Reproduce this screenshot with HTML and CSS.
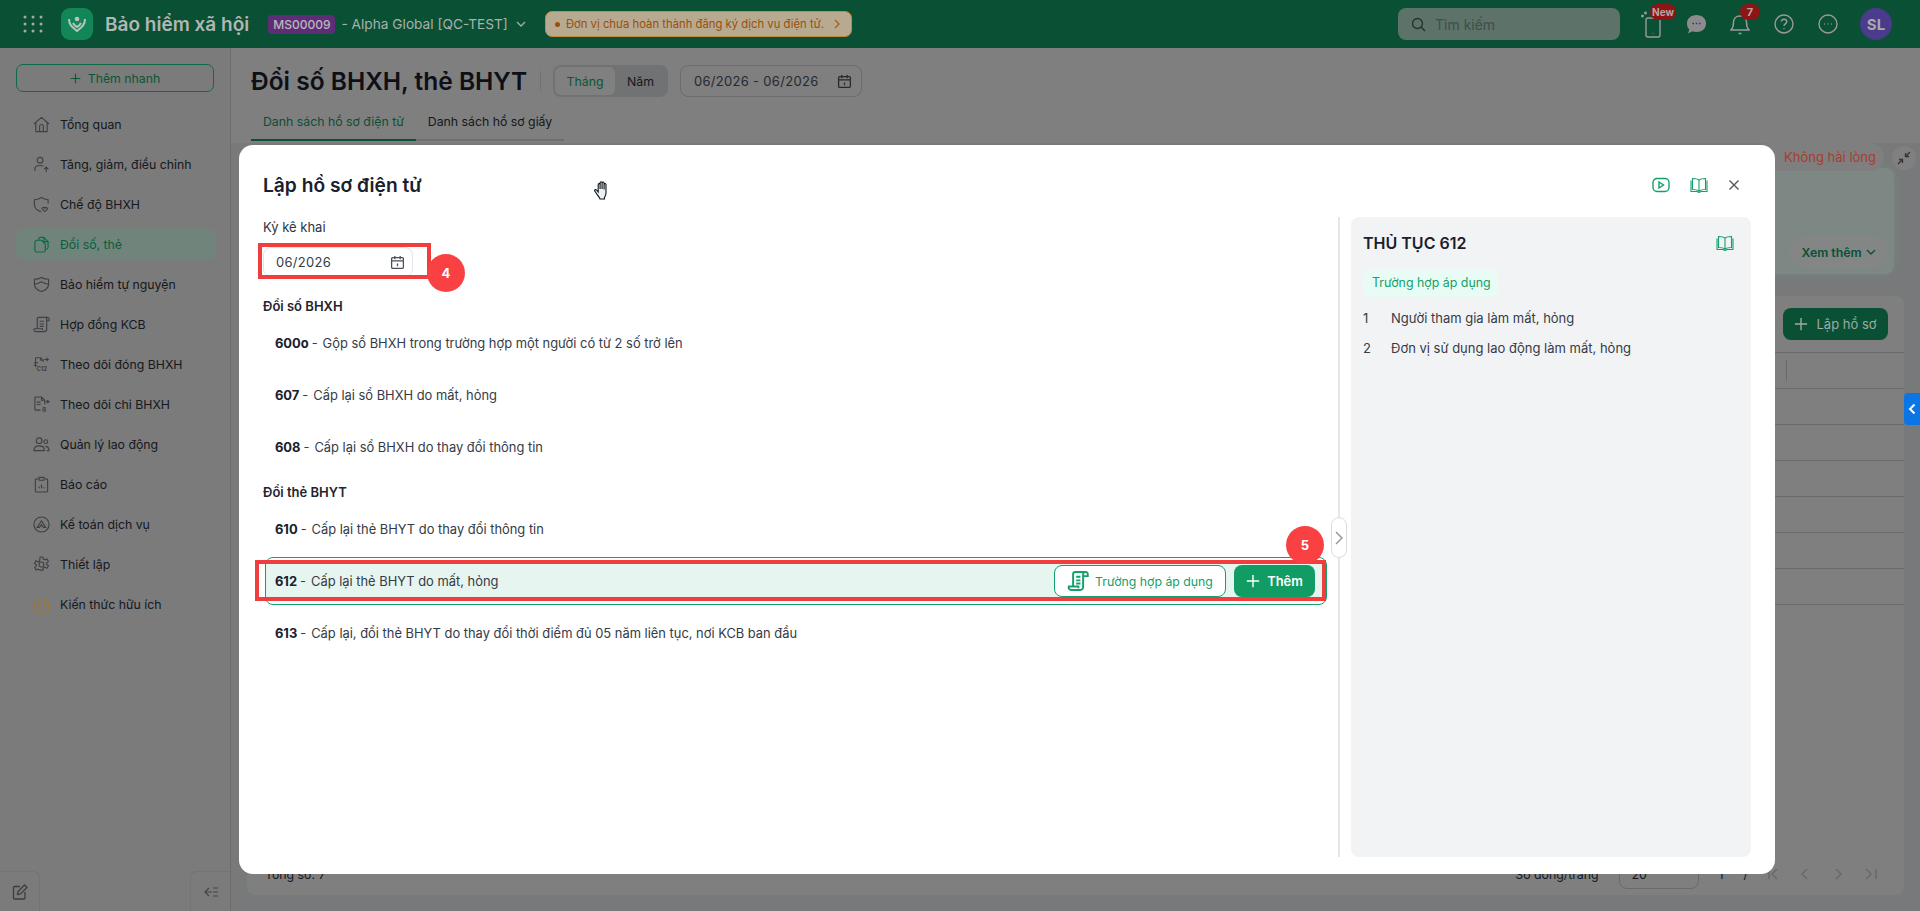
FILE: index.html
```html
<!DOCTYPE html>
<html lang="vi">

<head>
    <meta charset="UTF-8">
    <title>Bảo hiểm xã hội</title>
    <link rel="stylesheet" href="styles.css">
</head>

<body>
    <svg class="sprites" width="0" height="0">
        <symbol id="i-book" viewBox="0 0 18 16">
            <path d="M9 3C7.500 1.800 5 1.500 2.500 1.500v11c2.500 0 5 .3 6.500 1.500 1.500-1.200 4-1.500 6.500-1.500v-11C13 1.500 10.500 1.800 9 3v11M1 3.500v11h6l2 1 2-1h6v-11" fill="none" stroke="currentColor" stroke-width="1.100" />
        </symbol>
        <symbol id="i-cal" viewBox="0 0 14 14">
            <path d="M2.500 2.500h9a1 1 0 0 1 1 1v8a1 1 0 0 1-1 1h-9a1 1 0 0 1-1-1v-8a1 1 0 0 1 1-1zM1.500 5.500h11M4.500 1v3M9.500 1v3M7 8v2.500" fill="none" stroke="currentColor" stroke-width="1.200" />
        </symbol>
        <symbol id="i-scroll" viewBox="0 0 18 18">
            <path d="M5 13V3.500A1.800 1.800 0 0 1 6.800 1.700H15a1.800 1.800 0 0 0-1.800 1.800V14a2.300 2.300 0 0 1-2.300 2.300H3.300A2 2 0 0 1 1.500 13.500h7.800v1.500M13.500 5H17V3.500a1.700 1.700 0 0 0-2-1.800M7.500 5.500h3.500M7.500 8.500h3.500M7.500 11h3.500" fill="none" stroke="currentColor" stroke-width="1.600" />
        </symbol>
        <symbol id="i-plus" viewBox="0 0 16 16">
            <path d="M8 1v14M1 8h14" fill="none" stroke="currentColor" stroke-width="1.600" />
        </symbol>
    </svg>

    <header class="topbar">
        <svg class="apps" width="20" height="18" viewBox="0 0 20 18" fill="#a8a8a8">
            <circle cx="2" cy="2" r="1.500" /><circle cx="10" cy="2" r="1.500" /><circle cx="18" cy="2" r="1.500" />
            <circle cx="2" cy="9" r="1.500" /><circle cx="10" cy="9" r="1.500" /><circle cx="18" cy="9" r="1.500" />
            <circle cx="2" cy="16" r="1.500" /><circle cx="10" cy="16" r="1.500" /><circle cx="18" cy="16" r="1.500" />
        </svg>
        <span class="logo">
            <svg width="22" height="22" viewBox="0 0 22 22" fill="none" stroke="#b8c4be" stroke-width="2">
                <circle cx="11" cy="6" r="2.300" fill="#b8c4be" stroke="none" />
                <path d="M3 6c0 6 3 8 8 12 5-4 8-6 8-12M7 10c1 2 2 3 4 4 2-1 3-2 4-4" />
            </svg>
        </span>
        <span class="app-title">Bảo hiểm xã hội</span>
        <span class="org-code">MS00009</span>
        <span class="org-name">- Alpha Global [QC-TEST]</span>
        <svg class="org-caret" width="10" height="6" viewBox="0 0 10 6" fill="none" stroke="#a5b0aa" stroke-width="1.300"><path d="M1 1l4 4 4-4" /></svg>
        <div class="notice">
            <i class="notice-dot"></i>
            <span>Đơn vị chưa hoàn thành đăng ký dịch vụ điện tử.</span>
            <svg width="6" height="10" viewBox="0 0 6 10" fill="none" stroke="#a85a10" stroke-width="1.200"><path d="M1 1l4 4-4 4" /></svg>
        </div>
        <div class="search">
            <svg width="15" height="15" viewBox="0 0 15 15" fill="none" stroke="#23332c" stroke-width="1.300"><circle cx="6.500" cy="6.500" r="5" /><path d="M10 10l4 4" /></svg>
            <span>Tìm kiếm</span>
        </div>
        <div class="top-icon">
            <svg width="28" height="30" viewBox="0 0 28 30" fill="none" stroke="#9a9a9a" stroke-width="1.400">
                <rect x="8" y="9" width="14" height="19" rx="2" />
                <path d="M15 24.500v.5M3 7h3M4.500 5.500v3M7.500 2.500v3M6 4h3" />
            </svg>
            <span class="count-badge new-badge">New</span>
        </div>
        <div class="top-icon">
            <svg width="21" height="21" viewBox="0 0 21 21">
                <path d="M10.500 1C16 1 20 4.500 20 9.500S16 18 10.500 18c-1.500 0-2.800-.2-4-.7L2 19.500l1.300-4C1.800 14 1 12 1 9.500 1 4.500 5 1 10.500 1z" fill="#8c8c8c" />
                <path d="M6.500 9.500h1.500M9.800 9.500h1.500M13 9.500h1.500" stroke="#2b2bb5" stroke-width="1.600" />
            </svg>
        </div>
        <div class="top-icon">
            <svg width="20" height="22" viewBox="0 0 20 22" fill="none" stroke="#9a9a9a" stroke-width="1.400">
                <path d="M1 17h18c-2-2-2.500-4-2.500-7.500C16.500 5.500 14 3 10 3S3.500 5.500 3.500 9.500C3.500 13 3 15 1 17zM8.500 20.500h3" />
            </svg>
            <span class="count-badge bell-badge">7</span>
        </div>
        <div class="top-icon">
            <svg width="20" height="20" viewBox="0 0 20 20" fill="none" stroke="#9a9a9a" stroke-width="1.400">
                <circle cx="10" cy="10" r="9" /><path d="M7.300 7.500C7.500 6 8.600 5.200 10 5.200c1.600 0 2.800 1 2.800 2.400 0 2.200-2.800 2.300-2.800 4.400M10 14v1" />
            </svg>
        </div>
        <div class="top-icon">
            <svg width="20" height="20" viewBox="0 0 20 20" fill="none" stroke="#9a9a9a" stroke-width="1.400">
                <circle cx="10" cy="10" r="9" /><path d="M6 10h.8M9.600 10h.8M13.200 10h.8" />
            </svg>
        </div>
        <div class="top-icon user-slot"><span class="avatar">SL</span></div>
    </header>

    <div class="shell">
        <aside class="sidebar">
            <div class="quick-add"><svg width="11" height="11"><use href="#i-plus" /></svg> Thêm nhanh</div>
            <nav class="nav">
                <a class="nav-item">
                    <svg viewBox="0 0 18 18"><path d="M1 8.500L9 1.500l8 7M3 7v9.500h12V7M7 16.500V11a2 2 0 0 1 4 0v5.500" /></svg>
                    Tổng quan
                </a>
                <a class="nav-item">
                    <svg viewBox="0 0 18 18"><circle cx="7.500" cy="4.500" r="3" /><path d="M2 16v-2.500C2 11 4 10 7.500 10c1.500 0 2.500.2 3.500.6M14 17v-5M11.800 14l2.200-2.200 2.200 2.200" /></svg>
                    Tăng, giảm, điều chỉnh
                </a>
                <a class="nav-item">
                    <svg viewBox="0 0 18 18"><path d="M16 8V4C13 3.500 11 2.800 9 1.500 7 2.800 5 3.500 1.500 4v5c0 4 3 6.500 7 7.500M12.500 16.500l-2.500-2.300c-1.200-1.500 1.200-3 2.500-1.300 1.300-1.700 3.700-.2 2.500 1.300z" /></svg>
                    Chế độ BHXH
                </a>
                <a class="nav-item is-active">
                    <svg viewBox="0 0 18 18" stroke-width="1.600"><path d="M6 4.500V3.500a2 2 0 0 1 2-2h3.500L16 6v6a2 2 0 0 1-2 2h-1M11.500 1.500V6H16M2 6.500a2 2 0 0 1 2-2h5l4 4v6.500a2 2 0 0 1-2 2H4a2 2 0 0 1-2-2z" /></svg>
                    Đổi số, thẻ
                </a>
                <a class="nav-item">
                    <svg viewBox="0 0 18 18"><path d="M9 1.500C6.500 3 4.500 3.500 1.500 3.500v5c0 4 3 6.500 7.500 8 4.500-1.500 7.500-4 7.500-8v-5c-3 0-5-.5-7.500-2zM2 8.500c2.500 0 4.500-1 7-2.500 2.500 1.500 4.500 2.500 7 2.500" /></svg>
                    Bảo hiểm tự nguyện
                </a>
                <a class="nav-item">
                    <svg viewBox="0 0 18 18"><path d="M4.500 13V3a1.500 1.500 0 0 1 1.500-1.500h10c-1 0-1.500.7-1.500 1.500v11a2.500 2.500 0 0 1-2.500 2.500H3A1.800 1.800 0 0 1 1.500 13.500h8.500v1.500M7 5.500h4.500M7 8.500h4.500M7 11h4.500M14.500 5h2.500V3a1.500 1.500 0 0 0-1-1.500" /></svg>
                    Hợp đồng KCB
                </a>
                <a class="nav-item">
                    <svg viewBox="0 0 20 18"><path d="M3 12V2a1 1 0 0 1 1-1h5l3 3v2M9 1v3h3M1 7h5M1 10h4M13 3h5M16 1l2 2-2 2" /><text x="4" y="16.500" class="icon-text">C12</text></svg>
                    Theo dõi đóng BHXH
                </a>
                <a class="nav-item">
                    <svg viewBox="0 0 18 18"><path d="M8 15H3a1 1 0 0 1-1-1V2a1 1 0 0 1 1-1h6l3.500 3.500V9M9 1v3.500h3.500M4 6.500h4M4 9h4M13.500 6h3M15 4.500L17 6l-2 1.500" /><text x="9.500" y="16.500" class="icon-text">8</text></svg>
                    Theo dõi chi BHXH
                </a>
                <a class="nav-item">
                    <svg viewBox="0 0 18 18"><circle cx="6.500" cy="5" r="3" /><circle cx="13.500" cy="6" r="2" /><path d="M1 15.500c0-3 2-5 5.500-5s5.500 2 5.500 5zM13 11c2.500 0 4 1.500 4 4.500h-2.500" /></svg>
                    Quản lý lao động
                </a>
                <a class="nav-item">
                    <svg viewBox="0 0 18 18"><path d="M5.500 3H4a1.500 1.500 0 0 0-1.500 1.500v11A1.500 1.500 0 0 0 4 17h10a1.500 1.500 0 0 0 1.500-1.500v-11A1.500 1.500 0 0 0 14 3h-1.500M6.500 1.500h5v3h-5zM6.500 13v-2M9 13V9M11.500 13v-1" /></svg>
                    Báo cáo
                </a>
                <a class="nav-item">
                    <svg viewBox="0 0 18 18"><circle cx="9" cy="9" r="8" /><path d="M4.500 12L9 5l4.500 7h-2.500L9 9l-2 3z" /></svg>
                    Kế toán dịch vụ
                </a>
                <a class="nav-item">
                    <svg viewBox="0 0 18 18"><circle cx="9" cy="9" r="2.600" /><path d="M7.500 1h3l.5 2.300 1.700.8 2.100-1 1.500 2.600-1.800 1.600v1.400l1.800 1.600-1.500 2.600-2.100-1-1.700.8-.5 2.300h-3L7 14.700l-1.700-.8-2.100 1-1.500-2.600 1.800-1.600V9.300L1.700 7.700l1.500-2.600 2.100 1L7 5.300z" /></svg>
                    Thiết lập
                </a>
                <a class="nav-item is-gold">
                    <svg viewBox="0 0 18 18"><path d="M1 9v7.500h6l2 1 2-1h6V9h-2.500M3.500 9H1M9 1V0M3.500 3l1 1M14.500 3l-1 1M6.500 10.500C5 9.500 5 8.500 5 7.500a4 4 0 0 1 8 0c0 1-.2 2-1.500 3-.5.500-.5 1-.5 2H7c0-1 0-1.500-.5-2z" /></svg>
                    Kiến thức hữu ích
                </a>
            </nav>
            <div class="side-foot">
                <span class="foot-btn">
                    <svg width="16" height="16" viewBox="0 0 16 16" fill="none" stroke="#3c3c3c" stroke-width="1.300"><path d="M8 2.500H2.500a1 1 0 0 0-1 1V14a1 1 0 0 0 1 1H12a1 1 0 0 0 1-1V8M5.500 10.500l.5-3L12.500 1l2.500 2.500L8.500 10z" /></svg>
                </span>
                <span class="foot-btn">
                    <svg width="14" height="10" viewBox="0 0 14 10" fill="none" stroke="#454545" stroke-width="1.200"><path d="M5 1L1 5l4 4M1 5h7M9 1h5M9 5h5M9 9h5" /></svg>
                </span>
            </div>
        </aside>

        <main class="main">
            <div class="page-head">
                <div class="page-line">
                    <h1 class="page-title">Đổi số BHXH, thẻ BHYT</h1>
                    <i class="title-rule"></i>
                    <div class="seg">
                        <span class="seg-item is-on">Tháng</span>
                        <span class="seg-item">Năm</span>
                    </div>
                    <div class="range">
                        <span>06/2026 - 06/2026</span>
                        <svg width="15" height="15"><use href="#i-cal" /></svg>
                    </div>
                </div>
                <div class="tabs">
                    <span class="tab is-on">Danh sách hồ sơ điện tử</span>
                    <span class="tab">Danh sách hồ sơ giấy</span>
                </div>
            </div>
            <div class="page-body">
                <section class="summary">
                    <div class="summary-card">
                        <span class="more-pill">Xem thêm
                            <svg width="10" height="6" viewBox="0 0 10 6" fill="none" stroke="#0a5034" stroke-width="1.400"><path d="M1 1l4 4 4-4" /></svg>
                        </span>
                    </div>
                    <span class="rate-pill">Không hài lòng</span>
                    <span class="shrink-btn">
                        <svg width="14" height="14" viewBox="0 0 14 14" fill="none" stroke="#333" stroke-width="1.300"><path d="M13 1L8.500 5.500M8.500 2v3.500H12M1 13l4.500-4.500M5.500 12V8.500H2" /></svg>
                    </span>
                </section>
                <section class="list-card">
                    <div class="list-tools">
                        <span class="add-file"><svg width="14" height="14"><use href="#i-plus" /></svg> Lập hồ sơ</span>
                    </div>
                    <div class="grid-row is-head"><i class="col-rule"></i></div>
                    <div class="grid-row"></div>
                    <div class="grid-row"></div>
                    <div class="grid-row"></div>
                    <div class="grid-row"></div>
                    <div class="grid-row"></div>
                    <div class="grid-row"></div>
                    <div class="grid-row"></div>
                    <div class="list-foot">
                        <span>Tổng số: 7</span>
                        <div class="pager">
                            <span>Số dòng/trang</span>
                            <span class="page-size">20</span>
                            <span>1</span>
                            <span>/</span>
                            <svg width="110" height="12" viewBox="0 0 110 12" fill="none" stroke="#666" stroke-width="1.300">
                                <path d="M1 1v10M9 1L4 6l5 5M39 1l-5 5 5 5M68 1l5 5-5 5M98 1l5 5-5 5M108 1v10" />
                            </svg>
                        </div>
                    </div>
                </section>
            </div>
        </main>
    </div>

    <span class="side-tab">
        <svg width="8" height="12" viewBox="0 0 8 12" fill="none" stroke="#fff" stroke-width="2"><path d="M6.500 1.500L2 6l4.500 4.500" /></svg>
    </span>

    <div class="modal">
        <div class="modal-head">
            <h2 class="modal-title">Lập hồ sơ điện tử</h2>
            <div class="modal-actions">
                <svg class="green-icon" width="18" height="16" viewBox="0 0 18 16" fill="none" stroke="currentColor" stroke-width="1.400">
                    <rect x="1" y="1.500" width="16" height="13" rx="4" /><path d="M7 5v6l4.500-3z" />
                </svg>
                <svg class="green-icon" width="18" height="16"><use href="#i-book" /></svg>
                <svg width="12" height="12" viewBox="0 0 12 12" fill="none" stroke="#555" stroke-width="1.400"><path d="M1.500 1.500l9 9M10.500 1.500l-9 9" /></svg>
            </div>
        </div>
        <div class="modal-body">
            <div class="form-col">
                <label class="field-label">Kỳ kê khai</label>
                <div class="period">
                    <span>06/2026</span>
                    <svg width="15" height="15"><use href="#i-cal" /></svg>
                </div>

                <h3 class="group-title">Đổi số BHXH</h3>
                <div class="proc"><b>600o</b><span class="dash">-</span>Gộp sổ BHXH trong trường hợp một người có từ 2 số trở lên</div>
                <div class="proc"><b>607</b><span class="dash">-</span>Cấp lại sổ BHXH do mất, hỏng</div>
                <div class="proc"><b>608</b><span class="dash">-</span>Cấp lại sổ BHXH do thay đổi thông tin</div>

                <h3 class="group-title second">Đổi thẻ BHYT</h3>
                <div class="proc"><b>610</b><span class="dash">-</span>Cấp lại thẻ BHYT do thay đổi thông tin</div>
                <div class="proc is-picked">
                    <b>612</b><span class="dash">-</span>Cấp lại thẻ BHYT do mất, hỏng
                    <span class="proc-btns">
                        <span class="btn-case">
                            <svg width="22" height="22"><use href="#i-scroll" /></svg>
                            Trường hợp áp dụng
                        </span>
                        <span class="btn-add"><svg width="14" height="14"><use href="#i-plus" /></svg> Thêm</span>
                    </span>
                </div>
                <div class="proc"><b>613</b><span class="dash">-</span>Cấp lại, đổi thẻ BHYT do thay đổi thời điểm đủ 05 năm liên tục, nơi KCB ban đầu</div>
            </div>
            <div class="splitter">
                <span class="split-btn">
                    <svg width="8" height="14" viewBox="0 0 8 14" fill="none" stroke="#999" stroke-width="1.500"><path d="M1 1l6 6-6 6" /></svg>
                </span>
            </div>
            <aside class="info">
                <div class="info-head">
                    <span class="info-title">THỦ TỤC 612</span>
                    <svg class="green-icon" width="18" height="16"><use href="#i-book" /></svg>
                </div>
                <span class="info-chip">Trường hợp áp dụng</span>
                <ol class="info-list">
                    <li><span class="info-no">1</span>Người tham gia làm mất, hỏng</li>
                    <li><span class="info-no">2</span>Đơn vị sử dụng lao động làm mất, hỏng</li>
                </ol>
            </aside>
        </div>
    </div>

    <!-- Chu thich tren anh -->
    <i class="mark mark-period"></i>
    <span class="step step-4">4</span>
    <i class="mark mark-proc"></i>
    <span class="step step-5">5</span>

    <svg class="hand" width="19" height="20" viewBox="0 0 19 20" fill="#e8f2fa" stroke="#111" stroke-width="1.100">
        <path d="M5 17c-1.500-1.500-3-4-4.200-6-.6-1 .8-2 1.700-1l1.700 2V4.500c0-1.300 1.800-1.300 1.900 0V9 2.800c0-1.400 2-1.400 2 0V9 3c0-1.300 2-1.300 2 0v6.500-5c0-1.300 1.900-1.300 1.900 0V13c0 2-.6 3-1.500 4.500V19H6z" />
    </svg>
</body>

</html>
```

FILE: styles.css
```css
* {
    box-sizing: border-box;
}

html,
body {
    margin: 0;
    height: 100%;
    overflow: hidden;
}

body {
    position: relative;
    width: 1920px;
    height: 911px;
    background: #78797b;
    color: #14171c;
    font-family: Inter, "Noto Sans", "Liberation Sans", sans-serif;
    font-size: 12.3px;
}

h1,
h2,
h3,
ol {
    margin: 0;
    padding: 0;
}

.sprites {
    position: absolute;
}

/* Thanh tren cung */
.topbar {
    display: flex;
    align-items: center;
    height: 48px;
    padding-left: 23px;
    padding-right: 22px;
    background: #0a5034;
    color: #a8b0ac;
}

.logo {
    display: flex;
    align-items: center;
    justify-content: center;
    width: 32px;
    height: 32px;
    margin-left: 18px;
    border-radius: 9px;
    background: #138657;
}

.app-title {
    margin-left: 12px;
    font-size: 19px;
    font-weight: 600;
    color: #b2b6b4;
}

.org-code {
    display: flex;
    align-items: center;
    height: 19px;
    margin-left: 19px;
    padding: 0 5px;
    border-radius: 4px;
    background: #5f2d78;
    font-size: 12px;
    font-weight: 500;
    color: #b9b9b9;
}

.org-name {
    margin-left: 6px;
    font-size: 13.7px;
}

.org-caret {
    margin-left: 8px;
}

.notice {
    display: flex;
    align-items: center;
    width: 307px;
    height: 26px;
    margin-left: 19px;
    padding: 0 9px;
    border: 1px solid #c08a3c;
    border-radius: 7px;
    background: #b7aa91;
    font-size: 11.3px;
    color: #9a4f0b;
    white-space: nowrap;
}

.notice-dot {
    width: 5px;
    height: 5px;
    margin-right: 6px;
    border-radius: 50%;
    background: #9a4f0b;
}

.notice svg {
    margin-left: 10px;
}

.search {
    display: flex;
    align-items: center;
    gap: 9px;
    width: 222px;
    height: 32px;
    margin-left: auto;
    margin-right: 10px;
    padding-left: 13px;
    border-radius: 8px;
    background: #5d7268;
    font-size: 14px;
    color: #3f4f48;
}

.top-icon {
    position: relative;
    display: flex;
    align-items: center;
    justify-content: center;
    width: 44px;
    height: 48px;
}

.user-slot {
    margin-left: 4px;
}

.count-badge {
    position: absolute;
    top: 4px;
    height: 16px;
    border-radius: 8px;
    background: #8e1515;
    font-size: 11px;
    font-weight: 700;
    line-height: 16px;
    text-align: center;
    color: #b9a3a3;
}

.new-badge {
    left: 20px;
    width: 26px;
    font-size: 10px;
}

.bell-badge {
    left: 22px;
    width: 20px;
}

.avatar {
    display: flex;
    align-items: center;
    justify-content: center;
    width: 32px;
    height: 32px;
    border-radius: 50%;
    background: #4b3b8c;
    font-size: 15px;
    font-weight: 700;
    color: #aaa;
}

/* Khung chinh */
.shell {
    display: flex;
    height: 863px;
}

.sidebar {
    display: flex;
    flex-direction: column;
    width: 231px;
    border-right: 1px solid #6c6c6c;
    background: #7b7b7b;
}

.quick-add {
    display: flex;
    align-items: center;
    justify-content: center;
    gap: 7px;
    width: 198px;
    height: 28px;
    margin: 16px 0 16px 16px;
    border: 1px solid #0f6b46;
    border-radius: 7px;
    color: #0b5637;
}

.nav {
    display: flex;
    flex-direction: column;
    gap: 8px;
    padding: 0 14px 0 16px;
}

.nav-item {
    display: flex;
    align-items: center;
    gap: 10px;
    height: 32px;
    padding-left: 17px;
    border-radius: 9px;
    color: #15181d;
}

.nav-item svg {
    width: 17px;
    height: 17px;
    fill: none;
    stroke: #3e4044;
    stroke-width: 1.200;
    overflow: visible;
}

.icon-text {
    fill: #3e4044;
    stroke: none;
    font-size: 7px;
    font-weight: 700;
}

.nav-item.is-active {
    background: #70847b;
    color: #0a5f3c;
}

.nav-item.is-active svg {
    stroke: #0a6b43;
}

.nav-item.is-gold svg {
    stroke: #a8741c;
}

.side-foot {
    display: flex;
    justify-content: space-between;
    margin-top: auto;
    height: 40px;
}

.foot-btn {
    display: flex;
    align-items: center;
    justify-content: center;
    width: 40px;
    border: 1px solid #747474;
    border-bottom: 0;
}

.foot-btn:first-child {
    border-left: 0;
    border-top-right-radius: 7px;
}

.foot-btn:last-child {
    border-right: 0;
    border-top-left-radius: 7px;
}

.main {
    flex: 1;
    display: flex;
    flex-direction: column;
}

.page-head {
    height: 95px;
    padding: 17px 0 0 20px;
    background: #7f7f7f;
}

.page-line {
    display: flex;
    align-items: center;
    height: 32px;
}

.page-title {
    width: 289px;
    font-size: 24.5px;
    font-weight: 600;
    color: #0d1016;
}

.title-rule {
    width: 1px;
    height: 20px;
    background: #707070;
}

.seg {
    display: flex;
    width: 115px;
    height: 32px;
    padding: 2px;
    margin-left: 12px;
    border-radius: 8px;
    background: #717274;
}

.seg-item {
    display: flex;
    align-items: center;
    justify-content: center;
    flex: 1;
    color: #14171c;
}

.seg-item.is-on {
    width: 60px;
    flex: none;
    border-radius: 6px;
    background: #808080;
    color: #0b5637;
}

.range {
    display: flex;
    align-items: center;
    justify-content: space-between;
    width: 182px;
    height: 32px;
    margin-left: 12px;
    padding: 0 9px 0 13px;
    border: 1px solid #6c6c6c;
    border-radius: 8px;
    font-size: 13px;
    letter-spacing: .3px;
    color: #26292e;
}

.tabs {
    display: flex;
    width: 313px;
    height: 29px;
    margin-top: 15px;
    border-bottom: 2px solid #6e6e6e;
}

.tab {
    height: 29px;
    padding: 0 12px;
    color: #14171c;
    line-height: 20px;
    white-space: nowrap;
}

.tab.is-on {
    width: 165px;
    border-bottom: 2px solid #0a5034;
    color: #0a5034;
}

.page-body {
    flex: 1;
    padding: 0 16px;
    background: #78797b;
}

.summary {
    position: relative;
    height: 153px;
    padding: 25px 10px 0 0;
}

.summary-card {
    display: flex;
    align-items: flex-end;
    justify-content: flex-end;
    height: 106px;
    padding: 0 6px 6px 0;
    border-radius: 8px;
    background: #7d8885;
    box-shadow: 0 0 12px rgba(120, 170, 140, .25);
}

.more-pill {
    display: flex;
    align-items: center;
    justify-content: center;
    gap: 4px;
    width: 99px;
    height: 32px;
    border-radius: 16px;
    background: #838685;
    font-weight: 600;
    color: #0a5034;
}

.rate-pill {
    position: absolute;
    top: 0;
    right: 20px;
    display: flex;
    align-items: center;
    justify-content: flex-end;
    width: 130px;
    height: 28px;
    padding-right: 8px;
    border-radius: 14px;
    background: #7f7f7f;
    font-size: 13px;
    color: #a5402e;
}

.shrink-btn {
    position: absolute;
    top: 3px;
    right: -12px;
    display: flex;
    align-items: center;
    justify-content: center;
    width: 24px;
    height: 24px;
    border-radius: 50%;
    background: #808080;
}

.list-card {
    display: flex;
    flex-direction: column;
    height: 599px;
    border-radius: 8px;
    background: #7f7f7f;
}

.list-tools {
    display: flex;
    justify-content: flex-end;
    height: 56px;
    padding: 12px 16px 0 0;
}

.add-file {
    display: flex;
    align-items: center;
    justify-content: center;
    gap: 8px;
    width: 105px;
    height: 32px;
    border-radius: 8px;
    background: #0a5034;
    font-size: 13px;
    color: #9eaaa4;
}

.grid-row {
    height: 36px;
    border-top: 1px solid #6a6a6a;
    position: relative;
}

.grid-row.is-head .col-rule {
    position: absolute;
    top: 7px;
    right: 117px;
    width: 1px;
    height: 21px;
    background: #6a6a6a;
}

.grid-row:last-of-type {
    border-bottom: 1px solid #6a6a6a;
    height: 37px;
}

.list-foot {
    display: flex;
    align-items: center;
    justify-content: space-between;
    flex: 1;
    padding: 213px 26px 0 18px;
}

.pager {
    display: flex;
    align-items: center;
    gap: 20px;
}

.page-size {
    width: 80px;
    height: 30px;
    padding: 7px 12px;
    border: 1px solid #6a6a6a;
    border-radius: 8px;
}

/* Hop thoai */
.modal {
    position: absolute;
    top: 145px;
    left: 239px;
    display: flex;
    flex-direction: column;
    width: 1536px;
    height: 729px;
    padding: 0 24px 17px;
    border-radius: 14px;
    background: #fff;
    font-size: 13px;
}

.modal-head {
    display: flex;
    align-items: center;
    justify-content: space-between;
    height: 72px;
    flex: none;
    padding-top: 8px;
}

.modal-title {
    font-size: 19.2px;
    font-weight: 600;
    color: #1a202c;
}

.modal-actions {
    display: flex;
    align-items: center;
    gap: 20px;
    margin-right: 11px;
}

.green-icon {
    color: #14a06a;
}

.modal-body {
    flex: 1;
    display: flex;
    min-height: 0;
}

.form-col {
    display: flex;
    flex-direction: column;
    width: 1064px;
    color: #353b47;
}

.field-label {
    height: 20px;
    line-height: 20px;
    color: #2f3540;
}

.period {
    display: flex;
    align-items: center;
    justify-content: space-between;
    width: 150px;
    height: 30px;
    margin-top: 10px;
    padding: 0 7px 0 12px;
    border: 1px solid #e2e4e8;
    border-radius: 8px;
    color: #353b47;
    letter-spacing: .3px;
}

.period svg {
    color: #4a4f58;
}

.group-title {
    height: 20px;
    margin-top: 19px;
    font-size: 13px;
    font-weight: 600;
    line-height: 20px;
    color: #1f2430;
}

.group-title.second {
    margin-top: 9px;
}

.proc {
    display: flex;
    align-items: center;
    height: 48px;
    margin: 2px 0 2px 2px;
    padding: 0 11px 0 9px;
    border: 1px solid transparent;
    border-radius: 8px;
    font-size: 12.9px;
}

.group-title + .proc {
    margin-top: 3px;
}

.proc b {
    font-weight: 700;
    color: #1a202c;
}

.dash {
    margin: 0 5px 0 3px;
}

.proc.is-picked {
    border-color: #14a06a;
    background: linear-gradient(#fff 3px, #e6f5ef 3px, #e6f5ef 43px, #fff 43px);
}

.proc-btns {
    display: flex;
    gap: 8px;
    margin-left: auto;
}

.btn-case {
    display: flex;
    align-items: center;
    justify-content: center;
    gap: 6px;
    width: 172px;
    height: 32px;
    border: 1px solid #14a06a;
    border-radius: 8px;
    background: #fff;
    font-size: 12.3px;
    color: #14a06a;
}

.btn-add {
    display: flex;
    align-items: center;
    justify-content: center;
    gap: 7px;
    width: 81px;
    height: 32px;
    border-radius: 8px;
    background: #119c63;
    font-weight: 600;
    color: #fff;
}

.splitter {
    position: relative;
    width: 2px;
    margin: 0 11px;
    background: #e5e7eb;
}

.split-btn {
    position: absolute;
    top: 300px;
    left: -7px;
    display: flex;
    align-items: center;
    justify-content: center;
    width: 16px;
    height: 41px;
    border: 1px solid #dcdcdc;
    border-radius: 8px;
    background: #fff;
}

.info {
    width: 400px;
    padding: 16px 12px;
    border-radius: 8px;
    background: #f2f3f5;
}

.info-head {
    display: flex;
    align-items: center;
    justify-content: space-between;
    height: 20px;
    padding-right: 5px;
}

.info-title {
    font-size: 16px;
    font-weight: 600;
    color: #1a202c;
}

.info-chip {
    display: inline-block;
    height: 28px;
    margin-top: 16px;
    padding: 0 7px 0 9px;
    border-radius: 8px;
    background: #e8fcf5;
    font-size: 12.4px;
    line-height: 28px;
    color: #14a06a;
}

.info-list {
    list-style: none;
    margin-top: 6px;
}

.info-list li {
    display: flex;
    align-items: center;
    height: 30px;
    color: #353b47;
}

.info-no {
    width: 28px;
}

/* Chu thich */
.mark {
    position: absolute;
    border: 4px solid #f03e3e;
}

.mark-period {
    top: 243px;
    left: 258px;
    width: 173px;
    height: 36px;
}

.mark-proc {
    top: 560px;
    left: 255px;
    width: 1071px;
    height: 41px;
}

.step {
    position: absolute;
    display: flex;
    align-items: center;
    justify-content: center;
    width: 38px;
    height: 38px;
    border-radius: 50%;
    background: #f94144;
    font-size: 13px;
    font-weight: 700;
    color: #fff;
}

.step-4 {
    top: 254px;
    left: 427px;
}

.step-5 {
    top: 526px;
    left: 1286px;
}

.side-tab {
    position: absolute;
    top: 393px;
    right: 0;
    display: flex;
    align-items: center;
    justify-content: center;
    width: 16px;
    height: 32px;
    border-radius: 4px 0 0 4px;
    background: #0b75e6;
}

.hand {
    position: absolute;
    top: 180px;
    left: 594px;
}
```
